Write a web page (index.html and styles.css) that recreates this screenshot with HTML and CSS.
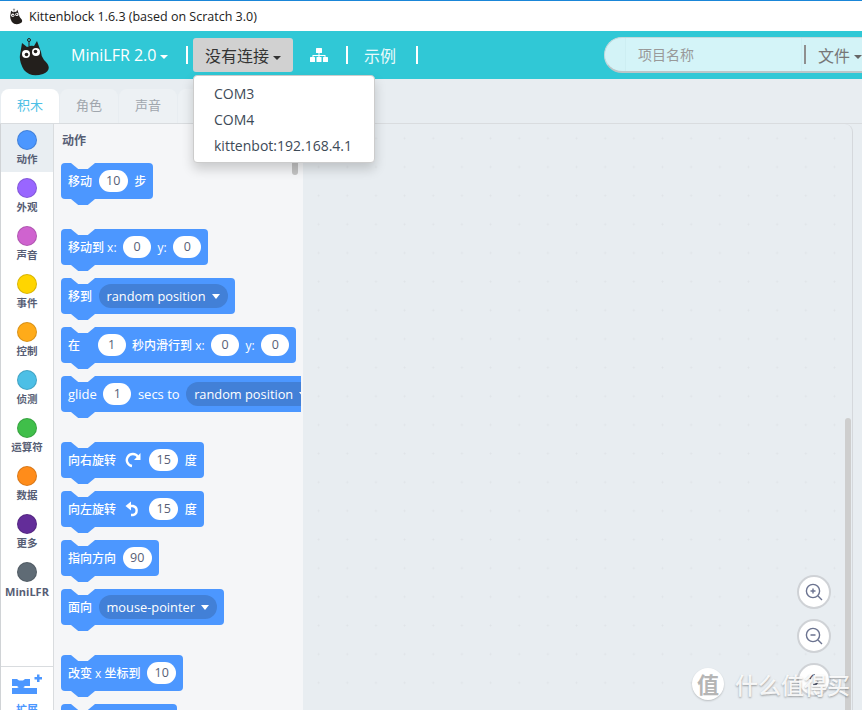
FILE: index.html
```html
<!DOCTYPE html>
<html lang="zh-CN">
<head>
    <meta charset="UTF-8">
    <title>Kittenblock 1.6.3 (based on Scratch 3.0)</title>
    <link rel="stylesheet" href="styles.css">
</head>
<body>
    <svg class="defs" width="0" height="0">
        <symbol id="cat" viewBox="0 0 36 40">
            <path d="M5 6 L10 10 Q14 8 17 9 L20 4 L24 15 Q24 19 27 23 Q37 32 26 37 Q14 41 7 33 Q2 25 3 18 Z" fill="#231f1c"/>
            <path d="M12 9 V4" stroke="#231f1c" stroke-width="1"/>
            <circle cx="12" cy="3" r="1.5" fill="none" stroke="#231f1c"/>
            <circle cx="9" cy="17" r="4" fill="#fff"/>
            <circle cx="9.5" cy="17.5" r="1.8" fill="#231f1c"/>
            <circle cx="19" cy="15" r="4" fill="#fff"/>
            <circle cx="18.5" cy="14.5" r="1.8" fill="#231f1c"/>
        </symbol>
    </svg>

    <div class="titlebar">
        <svg class="titleicon"><use href="#cat"/></svg>
        <span>Kittenblock 1.6.3 (based on Scratch 3.0)</span>
    </div>

    <div class="header">
        <svg class="logo"><use href="#cat"/></svg>
        <span class="menu robot">MiniLFR 2.0<i class="caret"></i></span>
        <span class="sep"></span>
        <div class="connect">
            <button class="connectbtn" type="button">没有连接<i class="caret dark"></i></button>
            <div class="dropdown">
                <div>COM3</div>
                <div>COM4</div>
                <div>kittenbot:192.168.4.1</div>
            </div>
        </div>
        <svg class="tree" width="18" height="14" viewBox="0 0 18 14" fill="#fff">
            <rect x="6" y="0" width="6" height="5" rx="0.5"/>
            <path d="M8.5 5h1v2h6v2h-1V8h-5v1h-1V8h-5v1h-1V7h6z"/>
            <rect x="0" y="9" width="5" height="5" rx="0.5"/>
            <rect x="6.5" y="9" width="5" height="5" rx="0.5"/>
            <rect x="13" y="9" width="5" height="5" rx="0.5"/>
        </svg>
        <span class="sep sep2"></span>
        <span class="menu examples">示例</span>
        <span class="sep sep3"></span>
        <div class="project">
            <div class="projectname">项目名称</div>
            <span class="graysep"></span>
            <span class="filemenu">文件<i class="caret gray"></i></span>
        </div>
    </div>

    <div class="tabs">
        <div class="tab active">积木</div>
        <div class="tab">角色</div>
        <div class="tab">声音</div>
        <div class="tab"></div>
    </div>

    <div class="editor">
        <div class="categories">
            <div class="cat selected"><span class="dot motion"></span>动作</div>
            <div class="cat"><span class="dot looks"></span>外观</div>
            <div class="cat"><span class="dot sound"></span>声音</div>
            <div class="cat"><span class="dot events"></span>事件</div>
            <div class="cat"><span class="dot control"></span>控制</div>
            <div class="cat"><span class="dot sensing"></span>侦测</div>
            <div class="cat"><span class="dot operators"></span>运算符</div>
            <div class="cat"><span class="dot data"></span>数据</div>
            <div class="cat"><span class="dot more"></span>更多</div>
            <div class="cat wide"><span class="dot minilfr"></span>MiniLFR</div>
            <div class="extension">
                <svg class="exticon" width="30" height="22" viewBox="0 0 30 22" fill="#4c97ff">
                    <path d="M0 5h5l2 1.5h4L13 5h5v7h-5l-2 1.5H7L5 12H0z"/>
                    <path d="M0 14h5l2-1h4l2 1h12v6H0z"/>
                    <path d="M22.5 3H25V0.5h2.5V3H30v2.5h-2.5V8H25V5.5h-2.5z"/>
                </svg>
                <span>扩展</span>
            </div>
        </div>

        <div class="palette">
            <div class="palettetitle">动作</div>
            <div class="blocks">
                <div class="block">移动 <b class="num">10</b> 步</div>
                <div class="block gap">移动到 x: <b class="num">0</b> y: <b class="num">0</b></div>
                <div class="block">移到 <b class="pick">random position<i class="tri"></i></b></div>
                <div class="block">在 <b class="num first">1</b> 秒内滑行到 x: <b class="num">0</b> y: <b class="num">0</b></div>
                <div class="block"><span class="en">glide</span> <b class="num">1</b> <span class="en">secs to</span> <b class="pick">random position<i class="tri"></i></b></div>
                <div class="block gap">向右旋转
                    <svg class="turn" width="16" height="16" viewBox="0 0 16 16" fill="none">
                        <path d="M13 5 A6 6 0 1 0 7 14" stroke="#fff" stroke-width="2.4"/>
                        <path d="M15.5 1 V8 H9 Z" fill="#fff"/>
                    </svg>
                    <b class="num">15</b> 度</div>
                <div class="block">向左旋转
                    <svg class="turn" width="16" height="16" viewBox="0 0 16 16" fill="none">
                        <path d="M5 5 H8 A4.6 4.6 0 0 1 8 14 H6" stroke="#fff" stroke-width="2.4"/>
                        <path d="M0.5 5 L6 0.5 V9.5 Z" fill="#fff"/>
                    </svg>
                    <b class="num">15</b> 度</div>
                <div class="block">指向方向 <b class="num">90</b></div>
                <div class="block">面向 <b class="pick">mouse-pointer<i class="tri"></i></b></div>
                <div class="block gap">改变 x 坐标到 <b class="num">10</b></div>
                <div class="block cutoff"></div>
            </div>
            <span class="thumb"></span>
        </div>

        <div class="workspace">
            <span class="wsthumb"></span>
            <div class="zooms">
                <div class="zoombtn">
                    <svg width="20" height="20" viewBox="0 0 20 20" fill="none" stroke="#6b7390" stroke-width="1.4">
                        <circle cx="9" cy="9" r="6.6"/>
                        <path d="M14 14 L18 18 M6.5 9 H11.5 M9 6.5 V11.5"/>
                    </svg>
                </div>
                <div class="zoombtn">
                    <svg width="20" height="20" viewBox="0 0 20 20" fill="none" stroke="#6b7390" stroke-width="1.4">
                        <circle cx="9" cy="9" r="6.6"/>
                        <path d="M14 14 L18 18 M6.5 9 H11.5"/>
                    </svg>
                </div>
                <div class="zoombtn">
                    <svg width="20" height="20" viewBox="0 0 20 20" fill="none" stroke="#575e75" stroke-width="1.6">
                        <path d="M6 9 Q7 5 11 5 M14 11 Q13 15 9 15"/>
                    </svg>
                </div>
            </div>
        </div>
    </div>

    <div class="watermark">
        <span class="wmcircle">值</span>
        <span class="wmtext">什么值得买</span>
    </div>
</body>
</html>
```
FILE: styles.css
```css
html, body {
    margin: 0;
    padding: 0;
    width: 862px;
    height: 710px;
    overflow: hidden;
    background-color: #e8edf1;
    font-family: "Open Sans", "Noto Sans CJK SC", sans-serif;
}
.defs {
    display: block;
    height: 0;
}
.titlebar {
    height: 30px;
    border-top: 1px solid #1a86d8;
    background-color: #fff;
    display: flex;
    align-items: center;
    padding-left: 9px;
    font-size: 12.5px;
    color: #222;
}
.titleicon {
    width: 15px;
    height: 17px;
    margin-right: 5px;
}
.header {
    height: 48px;
    background-color: #30c8d6;
    display: flex;
    align-items: center;
    color: #fff;
    position: relative;
    font-size: 16px;
}
.logo {
    width: 36px;
    height: 40px;
    margin-left: 17px;
    margin-top: 4px;
}
.menu {
    white-space: nowrap;
}
.robot {
    margin-left: 18px;
    width: 115px;
}
.caret {
    display: inline-block;
    margin-left: 4px;
    vertical-align: middle;
    border-top: 4px solid #fff;
    border-left: 4px solid transparent;
    border-right: 4px solid transparent;
}
.caret.dark {
    border-top-color: #333;
}
.caret.gray {
    border-top-color: #666;
}
.sep {
    width: 2px;
    height: 18px;
    background-color: #fff;
}
.connect {
    position: relative;
    margin-left: 5px;
}
.connectbtn {
    display: block;
    width: 100px;
    height: 34px;
    padding: 0;
    border: none;
    border-radius: 3px;
    background-color: #d1d1d1;
    color: #333;
    font-family: inherit;
    font-size: 16px;
}
.dropdown {
    position: absolute;
    top: 37px;
    left: 0;
    z-index: 5;
    width: 182px;
    height: 88px;
    box-sizing: border-box;
    padding: 5px 0;
    background-color: #fff;
    border: 1px solid #ccc;
    border-radius: 4px;
    box-shadow: 0 6px 12px rgba(0, 0, 0, 0.18);
    color: #3d4a57;
    font-size: 14px;
}
.dropdown div {
    height: 26px;
    line-height: 26px;
    padding-left: 20px;
    white-space: nowrap;
}
.tree {
    margin-left: 17px;
}
.sep2 {
    margin-left: 18px;
}
.examples {
    margin-left: 16px;
    color: #eafafb;
}
.sep3 {
    margin-left: 20px;
}
.project {
    margin-left: 186px;
    flex: 1;
    height: 36px;
    box-sizing: border-box;
    display: flex;
    align-items: center;
    background-color: #d3f3f7;
    border-radius: 18px 0 0 18px;
    border: 1px solid #c5d9dc;
    border-right: none;
    border-bottom: 2px solid #bcc6c8;
    color: #777;
    overflow: hidden;
}
.projectname {
    margin-left: 20px;
    width: 163px;
    height: 34px;
    line-height: 34px;
    padding-left: 12px;
    background-color: #d4f4f8;
    border-left: 1px solid #cdeef2;
    border-right: 1px solid #cdeef2;
    color: #999;
    font-size: 14px;
}
.graysep {
    width: 2px;
    height: 19px;
    margin-left: 2px;
    background-color: #8f8f8f;
}
.filemenu {
    margin-left: 12px;
    white-space: nowrap;
}
.tabs {
    display: flex;
    gap: 1px;
    height: 34px;
    margin-top: 10px;
    padding-left: 1px;
    border-bottom: 1px solid #d9dcdf;
}
.tab {
    width: 58px;
    text-align: center;
    line-height: 32px;
    font-size: 13px;
    color: #a0a6ad;
    background-color: #edf1f4;
    border-radius: 8px 8px 0 0;
}
.tab.active {
    background-color: #fff;
    color: #4cbfe6;
}
.editor {
    display: flex;
    height: 586px;
}
.categories {
    width: 52px;
    flex: none;
    border-left: 1px solid #d0d3d6;
    border-right: 1px solid #d9dcdf;
    background-color: #fff;
    display: flex;
    flex-direction: column;
}
.cat {
    height: 48px;
    flex: none;
    display: flex;
    flex-direction: column;
    align-items: center;
    padding-top: 6px;
    box-sizing: border-box;
    font-size: 10.5px;
    font-weight: 600;
    line-height: 15px;
    color: #575e75;
}
.cat.selected {
    background-color: #e9eef2;
}
.cat.wide {
    font-size: 11px;
    font-weight: 700;
}
.dot {
    width: 18px;
    height: 18px;
    margin-bottom: 2px;
    border-radius: 50%;
    border: 1px solid rgba(0, 0, 0, 0.15);
}
.motion { background-color: #4c97ff; }
.looks { background-color: #9966ff; }
.sound { background-color: #cf63cf; }
.events { background-color: #ffd500; }
.control { background-color: #ffab19; }
.sensing { background-color: #4cbfe6; }
.operators { background-color: #40bf4a; }
.data { background-color: #ff8c1a; }
.more { background-color: #632d99; }
.minilfr { background-color: #5f6b75; }
.extension {
    margin-top: auto;
    height: 44px;
    flex: none;
    box-sizing: border-box;
    border-top: 1px solid #d9dcdf;
    padding-top: 7px;
    display: flex;
    flex-direction: column;
    align-items: center;
    gap: 7px;
    font-size: 11px;
    line-height: 14px;
    color: #4c97ff;
    font-weight: 600;
}
.exticon,
.extension span {
    flex: none;
}
.palette {
    width: 249px;
    flex: none;
    position: relative;
    background-color: #f5f6f8;
    overflow: hidden;
}
.palettetitle {
    height: 39px;
    line-height: 34px;
    padding-left: 8px;
    font-size: 12px;
    font-weight: 700;
    color: #575e75;
}
.blocks {
    display: flex;
    flex-direction: column;
    align-items: flex-start;
    gap: 13px;
    width: 240px;
    margin-left: 7px;
    overflow: hidden;
    padding-bottom: 10px;
}
.block {
    position: relative;
    flex: none;
    height: 36px;
    box-sizing: border-box;
    display: flex;
    align-items: center;
    gap: 6.5px;
    padding: 0 7px;
    border-radius: 4px;
    background-color: #4c97ff;
    color: #fff;
    font-size: 12px;
    font-weight: 500;
    white-space: nowrap;
}
.block.gap {
    margin-top: 17px;
}
.block.cutoff {
    width: 116px;
}
.block::before,
.block::after {
    content: "";
    position: absolute;
    left: 10px;
    width: 24px;
    height: 6px;
    clip-path: polygon(0 0, 100% 0, 70% 100%, 30% 100%);
}
.block::before {
    top: 0;
    background-color: #f5f6f8;
}
.block::after {
    top: 100%;
    background-color: #4c97ff;
}
.en {
    font-size: 13px;
}
.num {
    flex: none;
    min-width: 28px;
    height: 22px;
    line-height: 22px;
    padding: 0 7.5px;
    box-sizing: border-box;
    text-align: center;
    border-radius: 11px;
    background-color: #fff;
    color: #575e75;
    font-size: 12.5px;
    font-weight: 400;
}
.num.first {
    margin-left: 11px;
}
.pick {
    flex: none;
    display: flex;
    align-items: center;
    height: 24px;
    padding: 0 8px;
    border-radius: 12px;
    background-color: #4280d7;
    font-size: 12.8px;
    font-weight: 500;
}
.tri {
    margin-left: 6px;
    border-top: 5px solid #fff;
    border-left: 4px solid transparent;
    border-right: 4px solid transparent;
}
.turn {
    flex: none;
    margin: 0 2px;
}
.thumb {
    position: absolute;
    top: 36px;
    left: 238px;
    width: 6px;
    height: 15px;
    border-radius: 3px;
    background-color: #c4c4c4;
}
.workspace {
    flex: none;
    width: 550px;
    box-sizing: border-box;
    position: relative;
    border-right: 1px solid #d5d8dc;
    border-top-right-radius: 8px;
    background-color: #e8edf1;
    background-image: radial-gradient(circle, #dfe3e7 0.8px, transparent 1.2px);
    background-size: 28.67px 28.67px;
    background-position: 1.3px 0;
}
.wsthumb {
    position: absolute;
    top: 294px;
    right: 1px;
    bottom: 0;
    width: 6px;
    border-radius: 3px 3px 0 0;
    background-color: #cecece;
}
.zooms {
    position: absolute;
    left: 494px;
    top: 451px;
    display: flex;
    flex-direction: column;
    gap: 10px;
}
.zoombtn {
    width: 34px;
    height: 34px;
    box-sizing: border-box;
    border: 2px solid #cfd2d6;
    border-radius: 50%;
    background-color: #fff;
    display: flex;
    align-items: center;
    justify-content: center;
}
.watermark {
    position: absolute;
    left: 692px;
    top: 667px;
    display: flex;
    align-items: center;
    gap: 11px;
    color: rgba(255, 255, 255, 0.9);
}
.wmcircle {
    width: 32px;
    height: 32px;
    border-radius: 50%;
    background-color: #fff;
    color: #b5b5b5;
    font-size: 22px;
    line-height: 32px;
    text-align: center;
    font-weight: 700;
    box-shadow: 0 1px 2px rgba(0, 0, 0, 0.2);
}
.wmtext {
    font-size: 23px;
    font-weight: 500;
    text-shadow: 0 1px 2px rgba(0, 0, 0, 0.35);
    white-space: nowrap;
}
```
